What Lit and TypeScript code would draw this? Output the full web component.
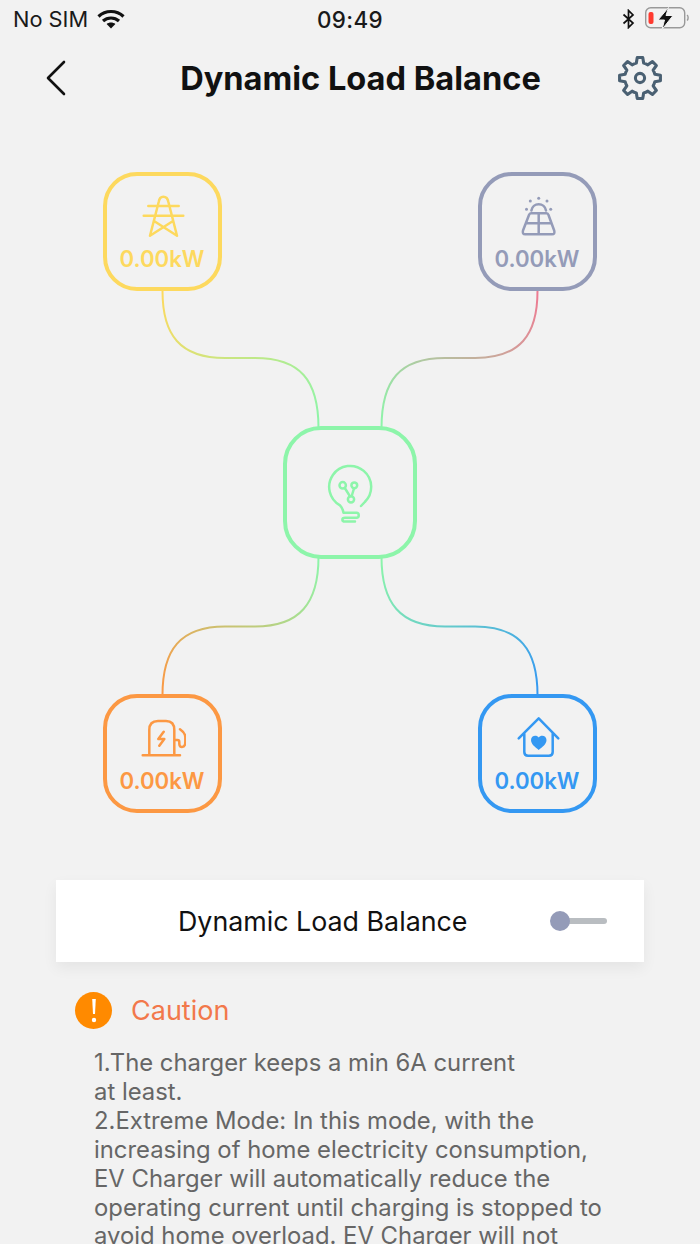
import { LitElement, html, css, svg } from "lit";
import { customElement } from "lit/decorators.js";

function gearPath(cx: number, cy: number, ro: number, ri: number, teeth: number) {
  const pts: string[] = [];
  for (let i = 0; i < teeth; i++) {
    const a = (i / teeth) * Math.PI * 2 - Math.PI / 2;
    const step = (Math.PI * 2) / teeth;
    const p = (r: number, t: number) =>
      `${(cx + r * Math.cos(t)).toFixed(2)} ${(cy + r * Math.sin(t)).toFixed(2)}`;
    pts.push(`${i === 0 ? "M" : "L"}${p(ro, a - step * 0.17)}`);
    pts.push(`L${p(ro, a + step * 0.17)}`);
    pts.push(`L${p(ri, a + step * 0.31)}`);
    pts.push(`A${ri} ${ri} 0 0 1 ${p(ri, a + step * 0.69)}`);
  }
  return pts.join(" ") + " Z";
}

const tower = svg`<path d="M9 41.7 17.7 8Q18.5 2.7 22.3 2.7 26.5 2.7 27.4 8L36 41.7M7.3 12H37.7M2.7 21.7H42.3M13 27 36 41.7M32 27 9 41.7"/>`;
const solar = svg`<path d="M15 19.3H30.5Q32 19.3 32.5 21L38.2 36.5Q39.3 40.3 36 40.3H9.3Q6 40.3 7 36.5L13 21Q13.5 19.3 15 19.3ZM22.7 19.3V40.3M9.8 29.3H35.6M15.4 16.5A7.4 7.4 0 0 1 30 16.5"/>
  <g class="fill"><circle cx="14.3" cy="7" r="1.500"/><circle cx="22.7" cy="4.3" r="1.500"/><circle cx="31" cy="7" r="1.500"/><circle cx="10.5" cy="15.3" r="1.500"/><circle cx="34.7" cy="15.3" r="1.500"/></g>`;
const bulb = svg`<path d="M35 43 38.8 39A21 21 0 1 0 14 42.3C16 44.5 17 46.5 17.5 49.7H30.5C33.5 49.7 33.5 54.8 30.5 54.8H19C15.5 54.8 15.5 58.6 19 58.6H29M18.8 25 24 33.3M28 25.5 25.7 33"/>
  <circle cx="16.7" cy="22.3" r="3.2"/><circle cx="28.3" cy="22.3" r="2.9"/><circle cx="25" cy="36.3" r="3.1"/>`;
const charger = svg`<path d="M1.7 39.3H39M8.3 39.3V14Q8.3 5 17 5H25Q33.3 5 33.3 14V39.3M22.7 15.7 17.3 23H23.3L18.3 29.7M34 24H36.5Q38.3 24 38.3 26V28Q38.5 31 41 31 44.3 31 44.3 26V21Q44.3 17 39 13.3"/>`;
const house = svg`<path d="M2.7 22.3 22.7 2.3 42.3 22.3M8.3 17V36Q8.3 39.7 12 39.7H33Q36.7 39.7 36.7 36V17"/>
  <path class="fill" d="M22.7 34C19 31 15 28 15 24 15 19 21 18.5 22.7 21.5 24.5 18.5 30.5 19 30.5 24 30.5 28 26.5 31 22.7 34Z"/>`;

const nodes = [
  { cls: "yellow", left: 103, top: 54, icon: tower },
  { cls: "slate", left: 478, top: 54, icon: solar },
  { cls: "orange", left: 103, top: 576, icon: charger },
  { cls: "blue", left: 478, top: 576, icon: house },
];

@customElement("app-root")
export class AppRoot extends LitElement {
  static styles = css`
    :host {
      display: block;
      width: 700px;
      height: 1244px;
      overflow: hidden;
      background: #f2f2f2;
      font-family: Inter, "Liberation Sans", sans-serif;
      color: #111;
    }
    .status {
      height: 38px;
      display: grid;
      grid-template-columns: 1fr auto 1fr;
      align-items: center;
      padding: 0 11px 0 13px;
      font-size: 21.8px;
      color: #1a1a1a;
    }
    .status .l { display: flex; align-items: center; gap: 9px; }
    .status .r { display: flex; align-items: center; justify-content: flex-end; gap: 10px; }
    .time { font-weight: 500; font-size: 22.4px; letter-spacing: 0.4px; margin-right: 2px; }
    .nav {
      height: 80px;
      display: flex;
      align-items: center;
      justify-content: space-between;
      padding: 0 37px 0 44px;
    }
    .nav h1 {
      margin: 0 0 0 36px;
      font-size: 32.6px;
      font-weight: 700;
      letter-spacing: 0;
    }
    .diagram {
      position: relative;
      height: 762px;
    }
    .wires { position: absolute; left: 0; top: -118px; }
    .node {
      position: absolute;
      box-sizing: border-box;
      width: 119px;
      height: 119px;
      border: 4px solid;
      border-radius: 34px;
      display: flex;
      flex-direction: column;
      align-items: center;
      padding-top: 18px;
      font-size: 22.2px;
      font-weight: 600;
    }
    .node svg { width: 45px; height: 45px; flex: none; margin-left: 1px; }
    .node span { margin-top: 6px; margin-right: 1px; line-height: 28px; }
    svg.icon { fill: none; stroke: currentColor; stroke-width: 2.5; stroke-linecap: round; stroke-linejoin: round; }
    svg.icon .fill { fill: currentColor; stroke: none; }
    .yellow { color: #fdd95e; }
    .slate { color: #949bb8; }
    .orange { color: #fc9843; }
    .blue { color: #3498f2; }
    .center {
      position: absolute;
      box-sizing: border-box;
      left: 283px;
      top: 308px;
      width: 134px;
      height: 133px;
      border: 4px solid #8df5aa;
      border-radius: 38px;
      color: #8df5aa;
      display: flex;
      align-items: center;
      justify-content: center;
    }
    .center svg { width: 48px; height: 64px; margin-top: 5px; }
    .card {
      margin: 0 56px;
      height: 82px;
      background: #fff;
      box-shadow: 0 6px 14px rgba(0, 0, 0, 0.06);
      display: flex;
      align-items: center;
      padding-left: 122px;
      padding-right: 37px;
      justify-content: space-between;
      font-size: 26.8px;
    }
    .toggle {
      position: relative;
      width: 56px;
      height: 6px;
      border-radius: 3px;
      background: #b9bdc1;
    }
    .toggle i {
      position: absolute;
      left: -1px;
      top: -7px;
      width: 20px;
      height: 20px;
      border-radius: 50%;
      background: #949bb8;
    }
    .caution {
      margin: 30px 0 0 75px;
      display: flex;
      align-items: center;
      gap: 19px;
      color: #f2784b;
      font-size: 27px;
    }
    .bang {
      width: 37px;
      height: 37px;
      border-radius: 50%;
      background: #ff8a00;
      display: flex;
      align-items: center;
      justify-content: center;
    }
    .notes {
      margin: 20px 0 0 94px;
      font-size: 23.85px;
      line-height: 28.9px;
      color: #666;
      white-space: nowrap;
    }
  `;

  render() {
    return html`
      <div class="status">
        <div class="l">
          <span>No SIM</span>
          <svg width="28" height="20" viewBox="0 0 28 20" fill="none" stroke="#111" stroke-width="3.2">
            <path d="M1.5 7.5C8.5 .8 19.5 .8 26.5 7.5M6 12C10.5 8 17.5 8 22 12"/>
            <path d="M14 19.5 9.6 15C12 13 16 13 18.4 15Z" fill="#111" stroke="none"/>
          </svg>
        </div>
        <div class="time">09:49</div>
        <div class="r">
          <svg width="13" height="20" viewBox="0 0 13 20" fill="none" stroke="#111" stroke-width="1.7"><path d="M1.5 5.5 11 14 6.5 18.5V1.5L11 6 1.5 14.5"/></svg>
          <svg width="44" height="24" viewBox="0 0 44 24" fill="none">
            <rect x=".7" y=".7" width="39" height="20" rx="5" stroke="#999" stroke-width="1.4"/>
            <rect x="3.5" y="5" width="5" height="12" rx="2" fill="#ff3b30"/>
            <path d="M42 8C43.500 9 43.500 12.500 42 13.500" stroke="#999" stroke-width="1.4"/>
            <path d="M23.500 .5 13 13H19.500L17 22.500 28 8.500H21Z" fill="#111" stroke="#f2f2f2" stroke-width="1"/>
          </svg>
        </div>
      </div>
      <div class="nav">
        <svg width="24" height="36" viewBox="0 0 24 36" fill="none" stroke="#111" stroke-width="2.6" stroke-linecap="round" stroke-linejoin="round"><path d="M20 2 4 18 20 34"/></svg>
        <h1>Dynamic Load Balance</h1>
        <svg width="46" height="46" viewBox="0 0 48 48" fill="none" stroke="#4a6072" stroke-width="3.2" stroke-linejoin="round">
          <path d="${gearPath(24, 24, 21.5, 16, 8)}"/>
          <circle cx="24" cy="24" r="4.8"/>
        </svg>
      </div>
      <div class="diagram">
        <svg class="wires" width="700" height="880" viewBox="0 0 700 880" fill="none" stroke-width="2">
          <defs>
            <linearGradient id="g1" gradientUnits="userSpaceOnUse" x1="162" y1="291" x2="318" y2="426"><stop offset="0" stop-color="#fdd95e"/><stop offset="1" stop-color="#8df5aa"/></linearGradient>
            <linearGradient id="g2" gradientUnits="userSpaceOnUse" x1="537" y1="291" x2="381" y2="426"><stop offset="0" stop-color="#ee7a92"/><stop offset="1" stop-color="#8df5aa"/></linearGradient>
            <linearGradient id="g3" gradientUnits="userSpaceOnUse" x1="318" y1="559" x2="162" y2="694"><stop offset="0" stop-color="#8df5aa"/><stop offset="1" stop-color="#fc9843"/></linearGradient>
            <linearGradient id="g4" gradientUnits="userSpaceOnUse" x1="381" y1="559" x2="537" y2="694"><stop offset="0" stop-color="#8df5aa"/><stop offset="1" stop-color="#3498f2"/></linearGradient>
          </defs>
          <path stroke="url(#g1)" d="M162.5 291C162.5 335 180 358 225 358H255C300 358 318.5 380 318.5 428"/>
          <path stroke="url(#g2)" d="M537.5 291C537.5 335 520 358 475 358H445C400 358 381.5 380 381.5 428"/>
          <path stroke="url(#g3)" d="M318.5 557C318.5 603 300 626.500 255 626.500H225C180 626.500 162.500 650 162.500 695"/>
          <path stroke="url(#g4)" d="M381.500 557C381.500 603 400 626.500 445 626.500H475C520 626.500 537.500 650 537.500 695"/>
        </svg>
        ${nodes.map(
          (n) => html`<div class="node ${n.cls}" style="left:${n.left}px;top:${n.top}px">
            <svg class="icon" viewBox="0 0 45 45">${n.icon}</svg>
            <span>0.00kW</span>
          </div>`
        )}
        <div class="center"><svg class="icon" viewBox="0 0 48 64">${bulb}</svg></div>
      </div>
      <div class="card">
        <span>Dynamic Load Balance</span>
        <div class="toggle"><i></i></div>
      </div>
      <div class="caution">
        <div class="bang">
          <svg width="6" height="25" viewBox="0 0 6 25" fill="#fff"><path d="M1.200 1H4.800L4 16H2Z"/><circle cx="3" cy="22" r="2.200"/></svg>
        </div>
        <span>Caution</span>
      </div>
      <div class="notes">
        1.The charger keeps a min 6A current<br />
        at least.<br />
        2.Extreme Mode: In this mode, with the<br />
        increasing of home electricity consumption,<br />
        EV Charger will automatically reduce the<br />
        operating current until charging is stopped to<br />
        avoid home overload. EV Charger will not
      </div>
    `;
  }
}
